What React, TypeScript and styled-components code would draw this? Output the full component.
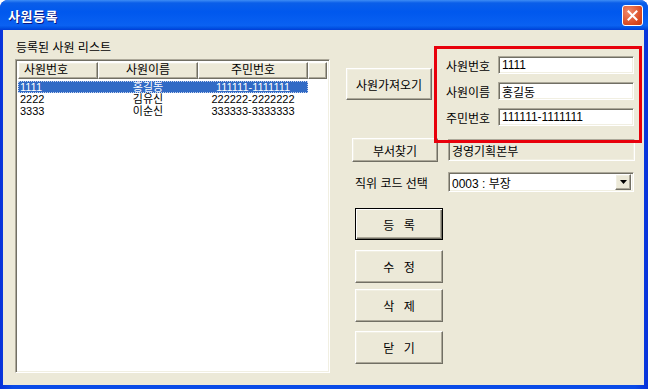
import React from 'react';
import styled, { createGlobalStyle, css } from 'styled-components';

const GlobalStyle = createGlobalStyle`
  html, body {
    margin: 0;
    padding: 0;
    overflow: hidden;
    background: #ffffff;
  }
  *, *::before, *::after {
    box-sizing: border-box;
  }
`;

const font = `"Liberation Sans", "Noto Sans CJK KR", "Noto Sans", sans-serif`;

const Window = styled.div`
  width: 648px;
  height: 389px;
  display: flex;
  flex-direction: column;
  background: linear-gradient(to right, #0831d9, #0a4be8 2%, #0a4be8 98%, #0831d9);
  border-radius: 8px 8px 0 0;
  overflow: hidden;
  font-family: ${font};
`;

const TitleBar = styled.div`
  height: 30px;
  flex-shrink: 0;
  display: flex;
  align-items: center;
  justify-content: space-between;
  padding: 0 5px 0 8px;
  background: linear-gradient(
    to bottom,
    #3d8cf5 0%,
    #0a5ee9 10%,
    #0058ee 40%,
    #0a61f2 85%,
    #0254e4 92%,
    #003dd7 100%
  );
`;

const Title = styled.span`
  color: #ffffff;
  font-size: 13px;
  font-weight: 700;
  letter-spacing: 0.5px;
  text-shadow: 1px 1px 0 #0a1883;
`;

const CloseButton = styled.div`
  width: 21px;
  height: 21px;
  border: 1px solid #ffffff;
  border-radius: 3px;
  background: radial-gradient(circle at 30% 30%, #f08a6c, #d9481f 70%, #c23a14);
  display: flex;
  align-items: center;
  justify-content: center;
`;

const Body = styled.div`
  flex: 1;
  margin: 0 4px 4px 3px;
  background: #ece9d8;
  display: flex;
  position: relative;
  font-size: 12px;
  color: #000000;
`;

const LeftColumn = styled.div`
  width: 327px;
  padding: 11px 0 0 12px;
  display: flex;
  flex-direction: column;
`;

const GroupLabel = styled.div`
  height: 14px;
  line-height: 14px;
  margin: 0 0 4px 1px;
`;

const sunken = css`
  border-top: 1px solid #aca899;
  border-left: 1px solid #aca899;
  border-right: 1px solid #ffffff;
  border-bottom: 1px solid #ffffff;
  box-shadow: inset 1px 1px 0 #716f64, inset -1px -1px 0 #f1efe2;
`;

const raised = css`
  background: #ece9d8;
  border-top: 1px solid #ffffff;
  border-left: 1px solid #ffffff;
  border-right: 1px solid #716f64;
  border-bottom: 1px solid #716f64;
  box-shadow: inset -1px -1px 0 #aca899, inset 1px 1px 0 #f1efe2;
`;

const ListBox = styled.div`
  width: 315px;
  height: 314px;
  background: #ffffff;
  ${sunken};
  padding: 2px;
  display: flex;
  flex-direction: column;
`;

const HeaderRow = styled.div`
  display: flex;
  height: 17px;
  flex-shrink: 0;
`;

const HeaderCell = styled.div<{ $w?: number; $left?: boolean }>`
  ${raised};
  ${(p) => (p.$w ? `width: ${p.$w}px;` : 'flex: 1;')}
  height: 17px;
  line-height: 15px;
  text-align: ${(p) => (p.$left ? 'left' : 'center')};
  padding-left: ${(p) => (p.$left ? '5px' : '0')};
`;

const Rows = styled.div`
  padding-top: 2px;
  display: flex;
  flex-direction: column;
`;

const Row = styled.div<{ $selected?: boolean }>`
  display: flex;
  width: 290px;
  height: 12px;
  line-height: 12px;
  font-size: 11px;
  ${(p) =>
    p.$selected &&
    css`
      background: #316ac5;
      color: #ffffff;
      outline: 1px dotted #c8d4ee;
      outline-offset: -1px;
    `}
`;

const Cell = styled.div<{ $w: number; $align?: string }>`
  width: ${(p) => p.$w}px;
  text-align: ${(p) => p.$align || 'center'};
  padding-left: ${(p) => (p.$align === 'left' ? '2px' : '0')};
  white-space: nowrap;
`;

const RightColumn = styled.div`
  flex: 1;
  display: flex;
  flex-direction: column;
  padding-top: 26px;
`;

const TopRow = styled.div`
  display: flex;
  align-items: flex-start;
`;

const Button = styled.div<{ $w: number; $h: number; $default?: boolean }>`
  width: ${(p) => p.$w}px;
  height: ${(p) => p.$h}px;
  display: flex;
  align-items: center;
  justify-content: center;
  white-space: pre;
  ${raised};
  ${(p) =>
    p.$default &&
    css`
      border: 1px solid #000000;
      box-shadow: inset 1px 1px 0 #ffffff, inset -1px -1px 0 #716f64, inset -2px -2px 0 #aca899;
    `}
`;

const FetchButton = styled(Button)`
  margin: 12px 0 0 16px;
`;

const FieldsGroup = styled.div`
  position: relative;
  margin-left: 14px;
  display: flex;
  flex-direction: column;
  gap: 8px;

  &::after {
    content: '';
    position: absolute;
    left: -12px;
    top: -10px;
    width: 208px;
    height: 97px;
    border: 3px solid #e8000b;
    pointer-events: none;
  }
`;

const FieldRow = styled.div`
  display: flex;
  align-items: center;
  gap: 4px;
`;

const FieldLabel = styled.span`
  width: 48px;
  white-space: nowrap;
`;

const TextBox = styled.div<{ $w: number; $h: number; $readonly?: boolean }>`
  width: ${(p) => p.$w}px;
  height: ${(p) => p.$h}px;
  ${sunken};
  background: ${(p) => (p.$readonly ? '#ece9d8' : '#ffffff')};
  padding-left: 3px;
  display: flex;
  align-items: center;
  white-space: nowrap;
`;

const DeptRow = styled.div`
  display: flex;
  align-items: center;
  margin-top: 12px;
  padding-left: 22px;
  gap: 10px;
`;

const PositionRow = styled.div`
  display: flex;
  align-items: center;
  margin-top: 10px;
  padding-left: 25px;
`;

const PositionLabel = styled.span`
  width: 93px;
  white-space: nowrap;
`;

const ComboBox = styled.div`
  width: 186px;
  height: 20px;
  ${sunken};
  background: #ffffff;
  display: flex;
  align-items: center;
  justify-content: space-between;
  padding: 0 2px 0 3px;
`;

const ComboArrow = styled.div`
  width: 16px;
  height: 16px;
  ${raised};
  display: flex;
  align-items: center;
  justify-content: center;
`;

const ActionList = styled.div`
  display: flex;
  flex-direction: column;
  padding-left: 25px;
`;

const ActionButton = styled(Button)<{ $mt: number }>`
  margin-top: ${(p) => p.$mt}px;
  letter-spacing: 3px;
  padding-left: 3px;
`;

const employees = [
  { id: '1111', name: '홍길동', rrn: '111111-1111111' },
  { id: '2222', name: '김유신', rrn: '222222-2222222' },
  { id: '3333', name: '이순신', rrn: '333333-3333333' },
];

const actions = [
  { label: '등 록', mt: 16, h: 32, isDefault: true },
  { label: '수 정', mt: 10, h: 33 },
  { label: '삭 제', mt: 6, h: 33 },
  { label: '닫 기', mt: 9, h: 33 },
];

const App = () => {
  return (
    <>
      <GlobalStyle />
      <Window>
        <TitleBar>
          <Title>사원등록</Title>
          <CloseButton>
            <svg width="11" height="11" viewBox="0 0 11 11">
              <path d="M1.5 1.5 L9.5 9.5 M9.5 1.5 L1.5 9.5" stroke="#ffffff" strokeWidth="2" strokeLinecap="square" />
            </svg>
          </CloseButton>
        </TitleBar>
        <Body>
          <LeftColumn>
            <GroupLabel>등록된 사원 리스트</GroupLabel>
            <ListBox>
              <HeaderRow>
                <HeaderCell $w={80} $left>사원번호</HeaderCell>
                <HeaderCell $w={100}>사원이름</HeaderCell>
                <HeaderCell $w={110}>주민번호</HeaderCell>
                <HeaderCell />
              </HeaderRow>
              <Rows>
                {employees.map((e, i) => (
                  <Row key={e.id} $selected={i === 0}>
                    <Cell $w={80} $align="left">{e.id}</Cell>
                    <Cell $w={100}>{e.name}</Cell>
                    <Cell $w={110}>{e.rrn}</Cell>
                  </Row>
                ))}
              </Rows>
            </ListBox>
          </LeftColumn>
          <RightColumn>
            <TopRow>
              <FetchButton $w={86} $h={32}>사원가져오기</FetchButton>
              <FieldsGroup>
                <FieldRow>
                  <FieldLabel>사원번호</FieldLabel>
                  <TextBox $w={136} $h={18}>1111</TextBox>
                </FieldRow>
                <FieldRow>
                  <FieldLabel>사원이름</FieldLabel>
                  <TextBox $w={136} $h={18}>홍길동</TextBox>
                </FieldRow>
                <FieldRow>
                  <FieldLabel>주민번호</FieldLabel>
                  <TextBox $w={136} $h={18}>111111-1111111</TextBox>
                </FieldRow>
              </FieldsGroup>
            </TopRow>
            <DeptRow>
              <Button $w={86} $h={24}>부서찾기</Button>
              <TextBox $w={187} $h={22} $readonly>경영기획본부</TextBox>
            </DeptRow>
            <PositionRow>
              <PositionLabel>직위 코드 선택</PositionLabel>
              <ComboBox>
                <span>0003 : 부장</span>
                <ComboArrow>
                  <svg width="7" height="4" viewBox="0 0 7 4">
                    <path d="M0 0 H7 L3.5 4 Z" fill="#000000" />
                  </svg>
                </ComboArrow>
              </ComboBox>
            </PositionRow>
            <ActionList>
              {actions.map((a) => (
                <ActionButton key={a.label} $w={88} $h={a.h} $mt={a.mt} $default={a.isDefault}>
                  {a.label}
                </ActionButton>
              ))}
            </ActionList>
          </RightColumn>
        </Body>
      </Window>
    </>
  );
};

export default App;
